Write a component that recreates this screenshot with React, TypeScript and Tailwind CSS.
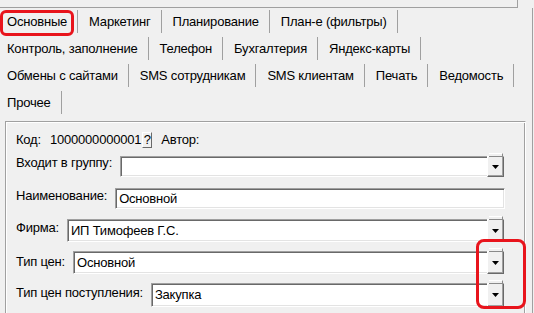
import React from "react";

const rows: string[][] = [
  ["Основные", "Маркетинг", "Планирование", "План-е (фильтры)"],
  ["Контроль, заполнение", "Телефон", "Бухгалтерия", "Яндекс-карты"],
  ["Обмены с сайтами", "SMS сотрудникам", "SMS клиентам", "Печать", "Ведомость"],
  ["Прочее"],
];

function DropButton() {
  return (
    <div className="absolute top-[-1px] bottom-[-1px] right-[-1px] w-[17px] bg-[#f0f0f0] border-t border-l border-t-white border-l-white border-b border-r border-b-[#696969] border-r-[#696969] shadow-[inset_-1px_-1px_0_#a0a0a0] flex items-center justify-center">
      <div className="absolute bottom-full left-[1px] w-[14px] h-[4px] bg-[#f0f0f0] border-t border-t-white border-b border-r border-b-[#8a8a8a] border-r-[#8a8a8a]" />
      <svg width="7" height="4" viewBox="0 0 7 4">
        <polygon points="0,0 7,0 3.5,4" fill="#000" />
      </svg>
    </div>
  );
}

function Field({
  label,
  value,
  h,
  mt,
  lmt,
  combo = true,
  extraRight = false,
}: {
  label: string;
  value: string;
  h: string;
  mt: string;
  lmt: string;
  combo?: boolean;
  extraRight?: boolean;
}) {
  return (
    <div className={`flex items-start gap-[8px] ${mt}`}>
      <span className={`leading-[16px] whitespace-nowrap ${lmt}`}>{label}</span>
      <div
        className={`relative flex-1 ${h} ${extraRight ? "mr-[-1px]" : ""} bg-white border border-t-[#a0a0a0] border-l-[#a0a0a0] border-b-white border-r-white shadow-[inset_1px_1px_0_#696969,inset_-1px_-1px_0_#e3e3e3] flex items-center pl-[3px]`}
      >
        <span className="leading-[16px] whitespace-nowrap">{value}</span>
        {combo && <DropButton />}
      </div>
    </div>
  );
}

export default function App() {
  return (
    <div
      className="relative w-[534px] h-[313px] overflow-hidden bg-[#f0f0f0] text-[13px] tracking-[-0.2px] text-black"
      style={{ fontFamily: '"Liberation Sans", Arial, sans-serif' }}
    >
      <div className="h-[8px] w-[518px] border-b border-r border-[#a0a0a0]" />
      <div className="w-[533px] h-[305px] border-r border-[#a0a0a0]">
        {rows.map((row, ri) => (
          <div key={ri} className="flex items-center h-[27px]">
            {row.map((t, i) => (
              <div
                key={t}
                className={`flex items-center h-[23px] ${i === 0 ? "pl-[7px]" : "pl-[11px]"} pr-[10px] border-r border-[#a0a0a0] whitespace-nowrap leading-[16px]`}
              >
                {t}
              </div>
            ))}
          </div>
        ))}
        <div className="mt-[5px] ml-[5px] w-[521px] h-[200px] border-t border-l border-t-[#a0a0a0] border-l-[#a0a0a0] border-r border-r-white shadow-[inset_1px_1px_0_#ffffff,inset_-1px_0_0_#a0a0a0] pt-[10px] pl-[10px] pr-[21px]">
          <div className="flex items-center h-[16px] leading-[16px] whitespace-nowrap">
            <span>Код:</span>
            <span className="ml-[9px]">1000000000001</span>
            <span className="ml-[1px] w-[10px] h-[16px] flex items-center justify-center bg-[#f0f0f0] border-t border-l border-t-white border-l-white border-b border-r border-b-[#696969] border-r-[#696969] leading-[14px]">
              ?
            </span>
            <span className="ml-[9px]">Автор:</span>
          </div>
          <Field label="Входит в группу:" value="" h="h-[21px]" mt="mt-[8px]" lmt="mt-[-1px]" />
          <Field label="Наименование:" value="Основной" h="h-[21px]" mt="mt-[11px]" lmt="mt-0" combo={false} extraRight />
          <Field label="Фирма:" value="ИП Тимофеев Г.С." h="h-[23px]" mt="mt-[10px]" lmt="mt-[1px]" />
          <Field label="Тип цен:" value="Основной" h="h-[23px]" mt="mt-[9px]" lmt="mt-[3px]" />
          <Field label="Тип цен поступления:" value="Закупка" h="h-[24px]" mt="mt-[9px]" lmt="mt-[2px]" />
        </div>
      </div>
      <div className="absolute left-0 top-[10px] w-[74px] h-[26px] border-[3px] border-[#e8141c] rounded-[6px]" />
      <div className="absolute left-[476px] top-[239px] w-[50px] h-[70px] border-[3px] border-[#e8141c] rounded-[8px]" />
    </div>
  );
}
